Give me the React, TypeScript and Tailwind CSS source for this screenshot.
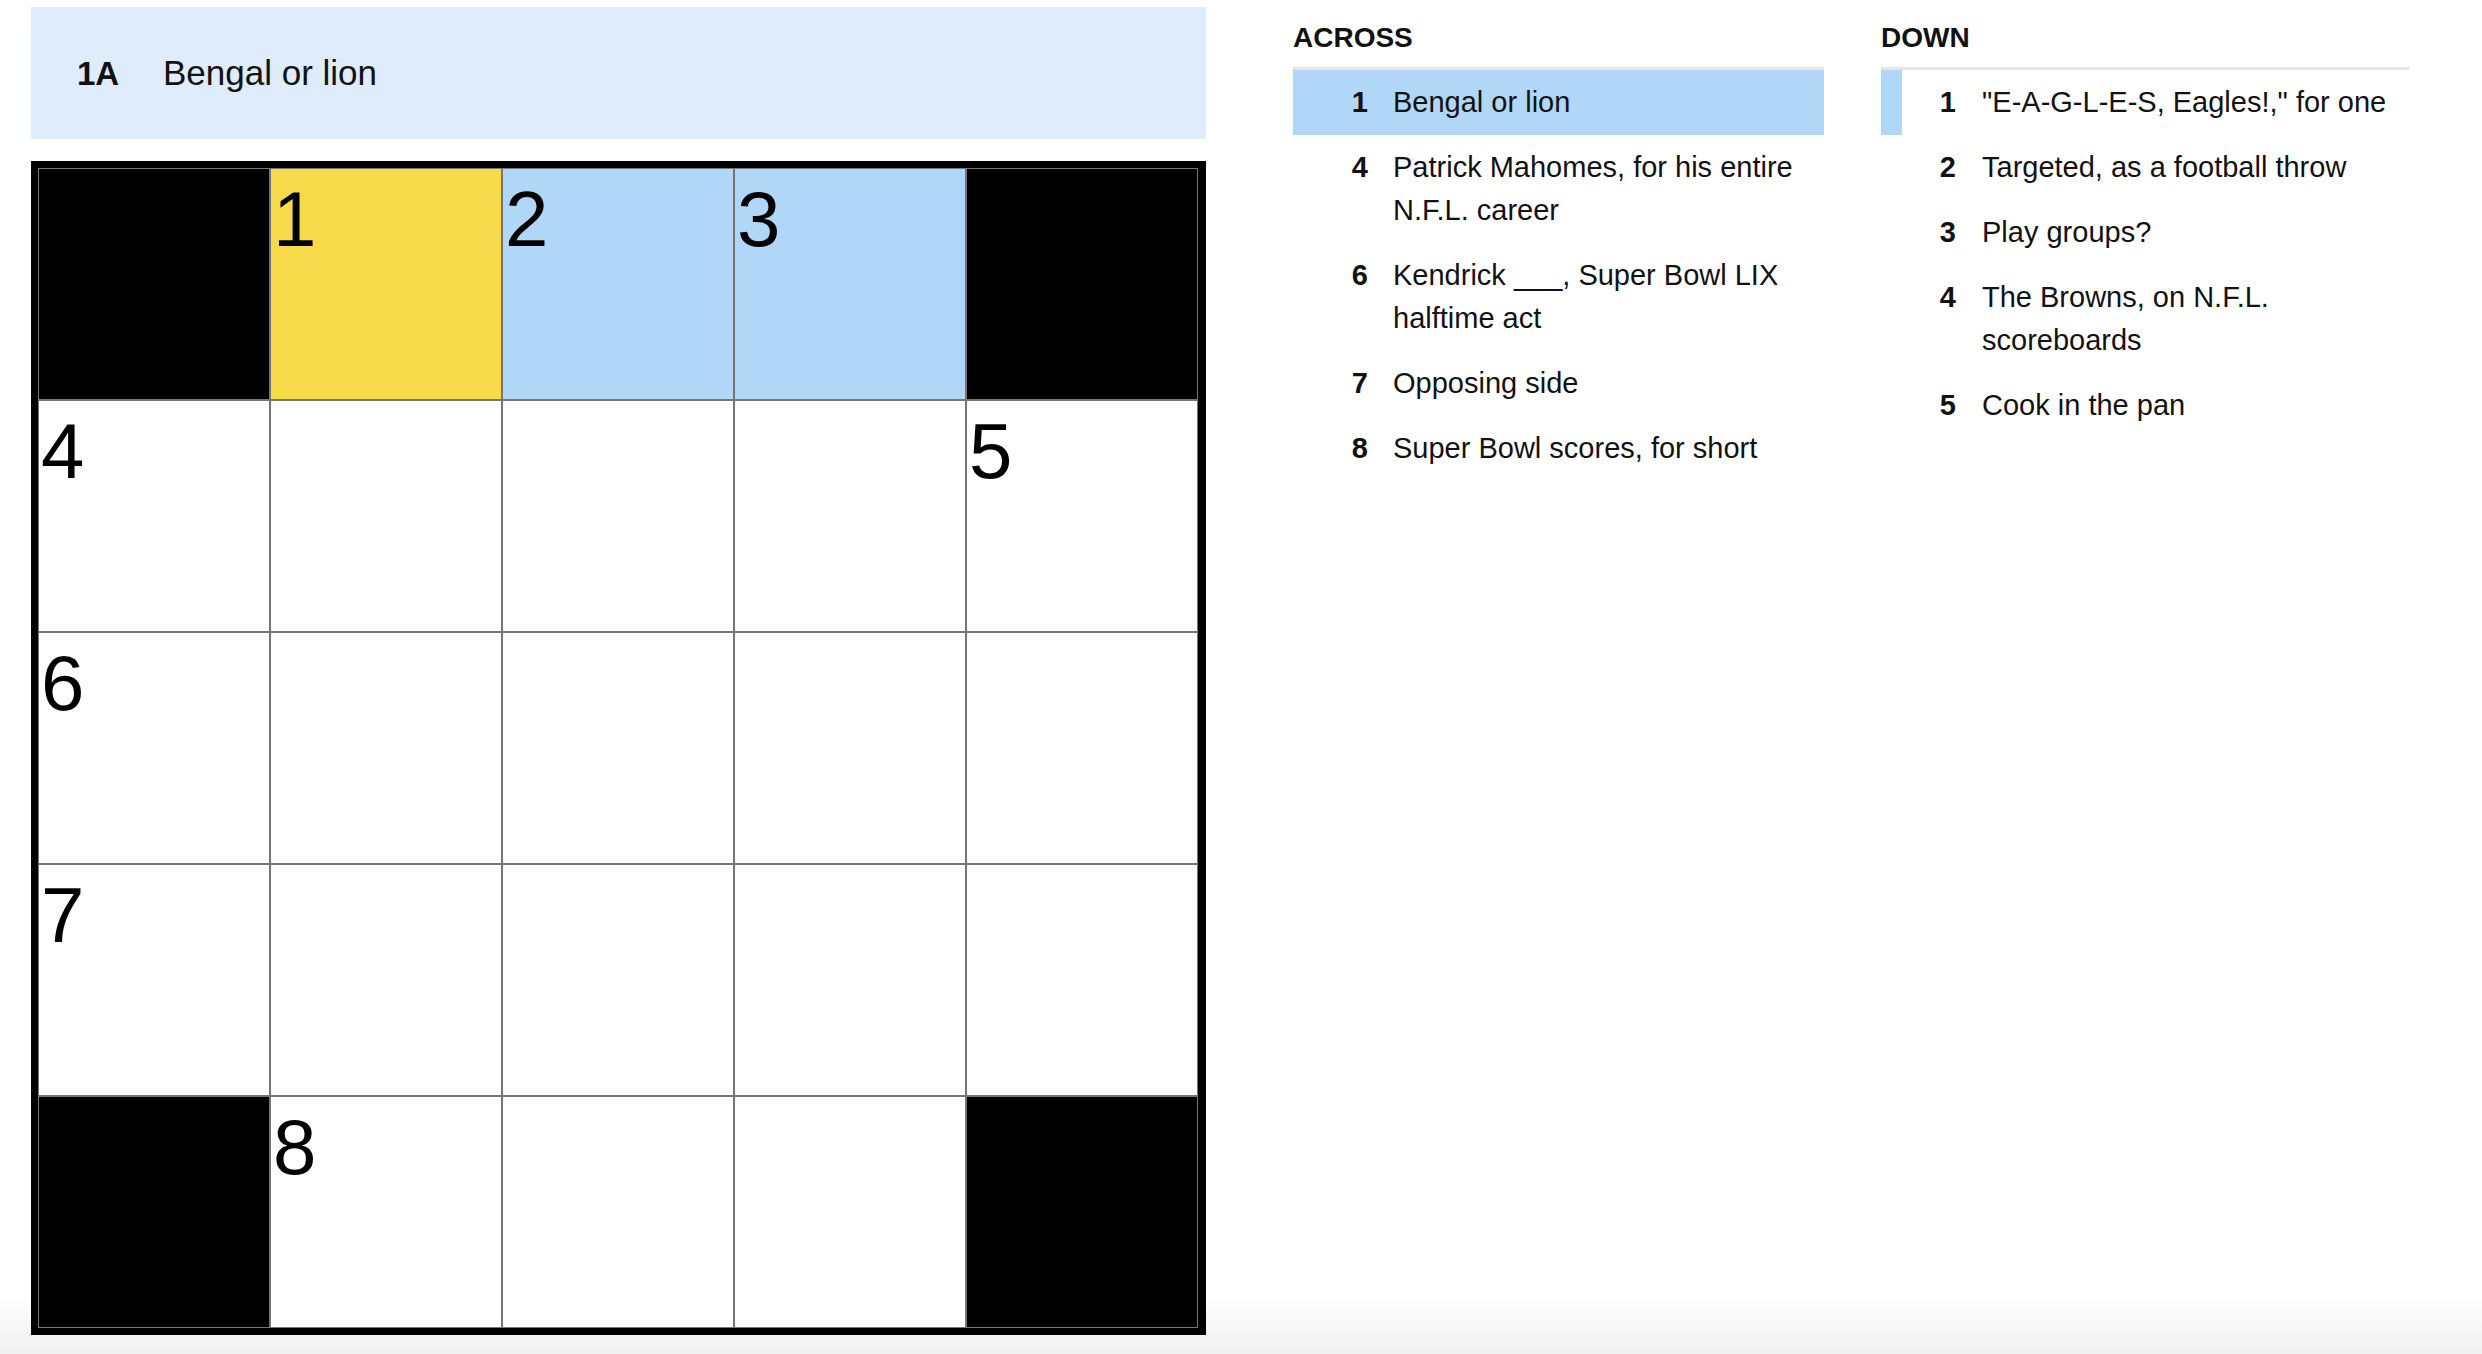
import React from "react";

type Cell = { kind: "black" | "white" | "yellow" | "blue"; num?: string };

const B: Cell = { kind: "black" };
const W = (num?: string): Cell => ({ kind: "white", num });

const grid: Cell[][] = [
  [B, { kind: "yellow", num: "1" }, { kind: "blue", num: "2" }, { kind: "blue", num: "3" }, B],
  [W("4"), W(), W(), W(), W("5")],
  [W("6"), W(), W(), W(), W()],
  [W("7"), W(), W(), W(), W()],
  [B, W("8"), W(), W(), B],
];

const across = [
  { n: "1", t: "Bengal or lion", active: true },
  { n: "4", t: "Patrick Mahomes, for his entire N.F.L. career" },
  { n: "6", t: "Kendrick ___, Super Bowl LIX halftime act" },
  { n: "7", t: "Opposing side" },
  { n: "8", t: "Super Bowl scores, for short" },
];

const down = [
  { n: "1", t: "\"E-A-G-L-E-S, Eagles!,\" for one", related: true },
  { n: "2", t: "Targeted, as a football throw" },
  { n: "3", t: "Play groups?" },
  { n: "4", t: "The Browns, on N.F.L. scoreboards" },
  { n: "5", t: "Cook in the pan" },
];

const cellBg: Record<Cell["kind"], string> = {
  black: "bg-black",
  white: "bg-white",
  yellow: "bg-[#f7da4a]",
  blue: "bg-[#b0d6f8]",
};

export default function App() {
  return (
    <div className="relative w-[2482px] h-[1354px] overflow-hidden bg-white text-[#121212] font-['Liberation_Sans',Arial,sans-serif]">
      {/* bottom fade, behind content */}
      <div className="pointer-events-none absolute bottom-0 left-0 right-0 h-[60px] bg-gradient-to-b from-white to-[#f0f0f0]" />

      <div className="relative flex">
        {/* Left: clue bar + grid */}
        <div className="ml-[31px] pt-[7px] w-[1175px] flex flex-col">
          <div className="h-[132px] bg-[#dfecfc] flex items-center pl-[46px]">
            <div className="flex items-baseline">
              <span className="w-[86px] text-[33px] font-bold leading-[40px]">1A</span>
              <span className="text-[35px] leading-[40px]">Bengal or lion</span>
            </div>
          </div>
          <div className="mt-[22px] w-[1175px] border-[7px] border-r-[8px] border-black bg-black grid grid-cols-[repeat(5,232px)] grid-rows-[repeat(5,232px)]">
            {grid.flat().map((c, i) => (
              <div
                key={i}
                className={`${cellBg[c.kind]} shadow-[inset_0_0_0_1px_#757575] pl-[3px] pt-[12px] text-[78px] leading-none text-black`}
              >
                {c.num ?? ""}
              </div>
            ))}
          </div>
        </div>

        {/* Right: clue lists */}
        <div className="ml-[87px] flex gap-[57px]">
          <div className="w-[531px]">
            <div className="pt-[14px] mb-[5px] text-[28px] font-bold leading-[48px]">ACROSS</div>
            <ul className="border-t-[3px] border-[#e6e6e6]">
              {across.map((c) => (
                <li
                  key={c.n}
                  className={`flex py-[11px] text-[29px] leading-[43px] ${c.active ? "bg-[#b0d6f8]" : ""}`}
                >
                  <span className="w-[75px] shrink-0 text-right font-bold">{c.n}</span>
                  <span className="ml-[25px]">{c.t}</span>
                </li>
              ))}
            </ul>
          </div>
          <div className="w-[529px]">
            <div className="pt-[14px] mb-[5px] text-[28px] font-bold leading-[48px]">DOWN</div>
            <ul className="border-t-[3px] border-[#e6e6e6]">
              {down.map((c) => (
                <li
                  key={c.n}
                  className={`flex py-[11px] text-[29px] leading-[43px] border-l-[21px] ${c.related ? "border-[#b0d6f8]" : "border-transparent"}`}
                >
                  <span className="w-[54px] shrink-0 text-right font-bold">{c.n}</span>
                  <span className="ml-[26px]">{c.t}</span>
                </li>
              ))}
            </ul>
          </div>
        </div>
      </div>
    </div>
  );
}
